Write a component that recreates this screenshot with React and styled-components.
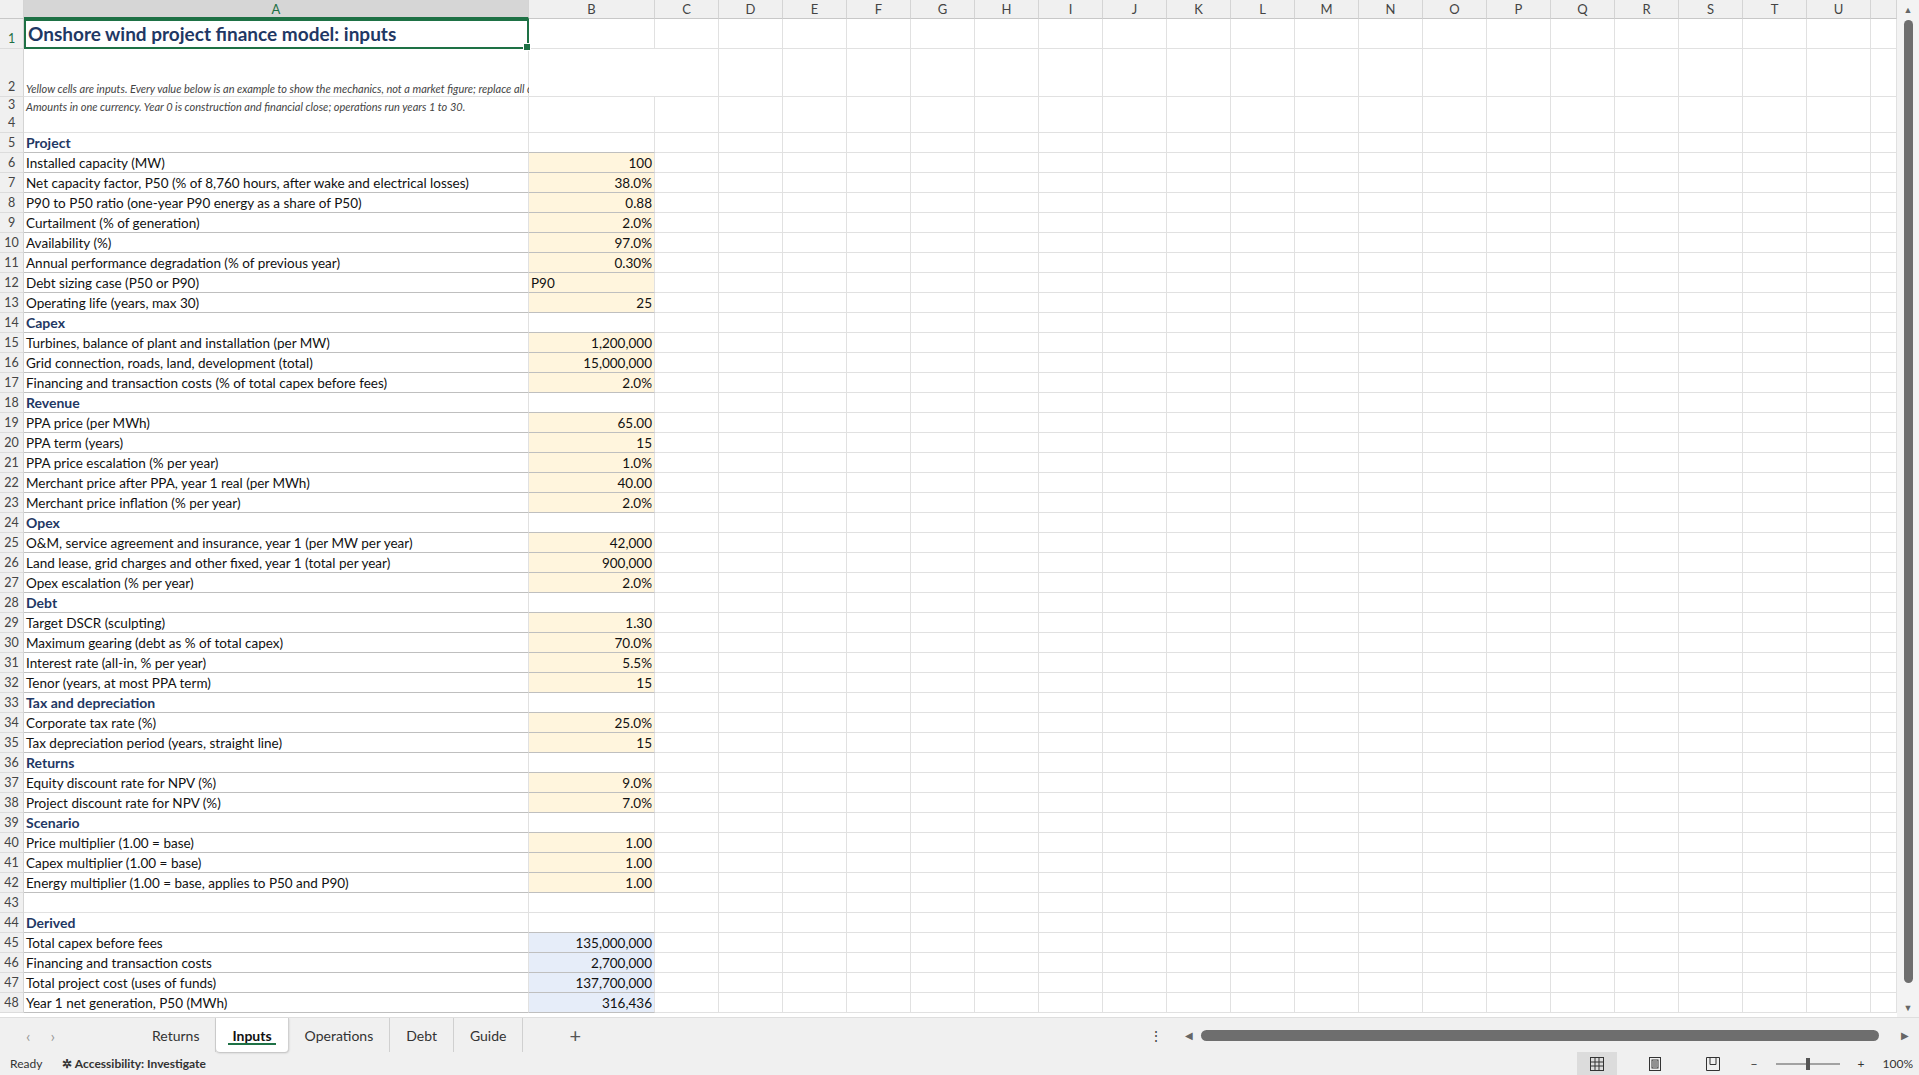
import React from "react";
import styled, { createGlobalStyle } from "styled-components";

const G = createGlobalStyle`
  html,body{margin:0;padding:0;background:#fff;overflow:hidden;}
  body{font-family:Lato,"Open Sans",sans-serif;}
`;
const cols = "CDEFGHIJKLMNOPQRSTU".split("");
const COLW = 64;
const TEMPLATE = `24px 505px 126px repeat(${cols.length}, ${COLW}px) 1fr`;

const rows = [
  [5, "Project", null, "h"],
  [6, "Installed capacity (MW)", "100", "i"],
  [7, "Net capacity factor, P50 (% of 8,760 hours, after wake and electrical losses)", "38.0%", "i"],
  [8, "P90 to P50 ratio (one-year P90 energy as a share of P50)", "0.88", "i"],
  [9, "Curtailment (% of generation)", "2.0%", "i"],
  [10, "Availability (%)", "97.0%", "i"],
  [11, "Annual performance degradation (% of previous year)", "0.30%", "i"],
  [12, "Debt sizing case (P50 or P90)", "P90", "il"],
  [13, "Operating life (years, max 30)", "25", "i"],
  [14, "Capex", null, "h"],
  [15, "Turbines, balance of plant and installation (per MW)", "1,200,000", "i"],
  [16, "Grid connection, roads, land, development (total)", "15,000,000", "i"],
  [17, "Financing and transaction costs (% of total capex before fees)", "2.0%", "i"],
  [18, "Revenue", null, "h"],
  [19, "PPA price (per MWh)", "65.00", "i"],
  [20, "PPA term (years)", "15", "i"],
  [21, "PPA price escalation (% per year)", "1.0%", "i"],
  [22, "Merchant price after PPA, year 1 real (per MWh)", "40.00", "i"],
  [23, "Merchant price inflation (% per year)", "2.0%", "i"],
  [24, "Opex", null, "h"],
  [25, "O&M, service agreement and insurance, year 1 (per MW per year)", "42,000", "i"],
  [26, "Land lease, grid charges and other fixed, year 1 (total per year)", "900,000", "i"],
  [27, "Opex escalation (% per year)", "2.0%", "i"],
  [28, "Debt", null, "h"],
  [29, "Target DSCR (sculpting)", "1.30", "i"],
  [30, "Maximum gearing (debt as % of total capex)", "70.0%", "i"],
  [31, "Interest rate (all-in, % per year)", "5.5%", "i"],
  [32, "Tenor (years, at most PPA term)", "15", "i"],
  [33, "Tax and depreciation", null, "h"],
  [34, "Corporate tax rate (%)", "25.0%", "i"],
  [35, "Tax depreciation period (years, straight line)", "15", "i"],
  [36, "Returns", null, "h"],
  [37, "Equity discount rate for NPV (%)", "9.0%", "i"],
  [38, "Project discount rate for NPV (%)", "7.0%", "i"],
  [39, "Scenario", null, "h"],
  [40, "Price multiplier (1.00 = base)", "1.00", "i"],
  [41, "Capex multiplier (1.00 = base)", "1.00", "i"],
  [42, "Energy multiplier (1.00 = base, applies to P50 and P90)", "1.00", "i"],
  [43, "", null, "e"],
  [44, "Derived", null, "h"],
  [45, "Total capex before fees", "135,000,000", "d"],
  [46, "Financing and transaction costs", "2,700,000", "d"],
  [47, "Total project cost (uses of funds)", "137,700,000", "d"],
  [48, "Year 1 net generation, P50 (MWh)", "316,436", "d"],
];

const Page = styled.div`display:flex;flex-direction:column;width:1919px;height:1075px;background:#fff;`;
const Main = styled.div`display:flex;height:1018px;overflow:hidden;`;
const Sheet = styled.div`flex:1;overflow:hidden;`;
const Row = styled.div`display:grid;grid-template-columns:${TEMPLATE};height:${p=>p.$h||20}px;`;
const Head = styled.div`
  background:#f0f0f0;border-right:1px solid #d4d4d4;border-bottom:1px solid #c8c8c8;
  display:flex;align-items:center;justify-content:center;font-size:13px;color:${p=>p.$sel?"#1e7145":"#444"};
  ${p=>p.$sel&&"background:#d6d6d6;border-bottom:2px solid #1e7145;"}
`;
const Num = styled.div`
  background:#f0f0f0;border-right:1px solid #d4d4d4;border-bottom:1px solid #dcdcdc;color:${p=>p.$sel?"#1e7145":"#444"};
  font-size:12.5px;display:flex;align-items:flex-end;justify-content:center;padding-bottom:2px;box-sizing:border-box;
`;
const Cell = styled.div`
  box-sizing:border-box;border-right:1px solid #e1e1e1;border-bottom:1px solid ${p=>p.$line?"#bfbfbf":"#e1e1e1"};
  background:${p=>p.$bg||"#fff"};font-size:13.5px;color:#111;padding:0 2px;white-space:nowrap;
  display:flex;align-items:flex-end;padding-bottom:1px;justify-content:${p=>p.$right?"flex-end":"flex-start"};
  ${p=>p.$bold&&"font-weight:700;color:#1f3864;font-size:14px;"}
`;
const Title = styled(Cell)`
  border:2px solid #1e7145;font-size:19px;font-weight:700;color:#1f3864;align-items:center;position:relative;
`;
const Handle = styled.span`position:absolute;right:-4px;bottom:-4px;width:6px;height:6px;background:#1e7145;border:1px solid #fff;`;
const Note = styled(Cell)`font-style:italic;font-size:11px;color:#444;overflow:visible;`;
const VScroll = styled.div`width:22px;background:#f3f3f3;position:relative;display:flex;justify-content:center;`;
const Thumb = styled.div`position:absolute;top:20px;bottom:34px;width:9px;background:#6e6e6e;border-radius:5px;`;
const Arrow = styled.div`position:absolute;${p=>p.$top?"top:4px":"bottom:4px"};font-size:9px;color:#666;`;
const TabBar = styled.div`height:34px;background:#f0f0f0;border-top:1px solid #dedede;display:flex;align-items:center;font-size:14px;color:#333;`;
const Nav = styled.div`width:110px;display:flex;gap:20px;padding-left:26px;color:#999;font-size:16px;`;
const Tab = styled.div`padding:0 16px;height:100%;display:flex;align-items:center;border-right:1px solid #d0d0d0;position:relative;
  ${p=>p.$active&&"background:#fff;font-weight:700;color:#111;border-radius:0 0 4px 4px;box-shadow:0 1px 2px #bbb;"}
`;
const Under = styled.span`position:absolute;left:12px;right:12px;bottom:7px;height:2px;background:#1e7145;`;
const HScroll = styled.div`margin-left:auto;display:flex;align-items:center;gap:8px;width:760px;margin-right:10px;`;
const HTrack = styled.div`flex:1;height:11px;background:#6e6e6e;border-radius:6px;`;
const Status = styled.div`height:23px;background:#f0f0f0;display:flex;align-items:center;font-size:12px;color:#333;padding-left:10px;`;
const Right = styled.div`margin-left:auto;display:flex;align-items:center;gap:18px;height:100%;padding-right:6px;`;
const ViewBtn = styled.div`height:100%;width:40px;display:flex;align-items:center;justify-content:center;${p=>p.$on&&"background:#dcdcdc;"}`;

function GridIcon(){return <svg width="14" height="14" viewBox="0 0 14 14" fill="none" stroke="#333"><rect x=".5" y=".5" width="13" height="13"/><path d="M5 .5v13M9 .5v13M.5 5h13M.5 9h13"/></svg>;}
function PageIcon(){return <svg width="12" height="14" viewBox="0 0 12 14" fill="none" stroke="#333"><rect x=".5" y=".5" width="11" height="13"/><rect x="3" y="3" width="6" height="8"/><path d="M4 5h4M4 7h4M4 9h4"/></svg>;}
function BreakIcon(){return <svg width="14" height="14" viewBox="0 0 14 14" fill="none" stroke="#333"><path d="M.5.5h13v13H.5zM4 .5v7h6V.5"/></svg>;}

export default function App(){
  return <Page><G/>
    <Main><Sheet>
      <Row $h={19}>
        <Head/>
        <Head $sel>A</Head><Head>B</Head>
        {cols.map(c=><Head key={c}>{c}</Head>)}<Head/>
      </Row>
      <Row $h={30}>
        <Num $sel>1</Num>
        <Title>Onshore wind project finance model: inputs<Handle/></Title>
        <Cell/>{cols.map(c=><Cell key={c}/>)}<Cell/>
      </Row>
      <Row $h={48}>
        <Num>2</Num>
        <Note>Yellow cells are inputs. Every value below is an example to show the mechanics, not a market figure; replace all of them with your project's numbers.</Note>
        <Cell style={{borderRight:"none"}}/><Cell/>{cols.slice(1).map(c=><Cell key={c}/>)}<Cell/>
      </Row>
      <Row $h={16}>
        <Num>3</Num>
        <Note>Amounts in one currency. Year 0 is construction and financial close; operations run years 1 to 30.</Note>
        <Cell/>{cols.map(c=><Cell key={c}/>)}<Cell/>
      </Row>
      <Row>
        <Num>4</Num><Cell/><Cell/>{cols.map(c=><Cell key={c}/>)}<Cell/>
      </Row>
      {rows.map(([n,label,val,t])=>{
        const bg = t==="i"||t==="il" ? "#fff5dd" : t==="d" ? "#e6edf9" : undefined;
        const line = t!=="e";
        return <Row key={n}>
          <Num>{n}</Num>
          <Cell $bold={t==="h"} $line={line}>{label}</Cell>
          <Cell $bg={bg} $right={t!=="il"} $line={line}>{val}</Cell>
          {cols.map(c=><Cell key={c}/>)}<Cell/>
        </Row>;
      })}
    </Sheet>
    <VScroll><Arrow $top>▲</Arrow><Thumb/><Arrow>▼</Arrow></VScroll>
    </Main>
    <TabBar>
      <Nav><span>‹</span><span>›</span></Nav>
      <Tab>Returns</Tab>
      <Tab $active>Inputs<Under/></Tab>
      <Tab>Operations</Tab>
      <Tab>Debt</Tab>
      <Tab>Guide</Tab>
      <Tab style={{border:"none",marginLeft:30,fontSize:20,color:"#555"}}>+</Tab>
      <HScroll><span style={{color:"#444",marginRight:14}}>⋮</span><span style={{fontSize:10,color:"#666"}}>◀</span><HTrack/><span style={{fontSize:10,color:"#666",marginLeft:14}}>▶</span></HScroll>
    </TabBar>
    <Status>
      <span>Ready</span>
      <span style={{marginLeft:20,fontWeight:700}}>✲ Accessibility: Investigate</span>
      <Right>
        <ViewBtn $on><GridIcon/></ViewBtn><ViewBtn><PageIcon/></ViewBtn><ViewBtn><BreakIcon/></ViewBtn>
        <span>−</span>
        <svg width="64" height="14"><path d="M0 7h64" stroke="#555"/><rect x="30" y="1" width="4" height="12" fill="#555"/></svg>
        <span>+</span><span>100%</span>
      </Right>
    </Status>
  </Page>;
}
